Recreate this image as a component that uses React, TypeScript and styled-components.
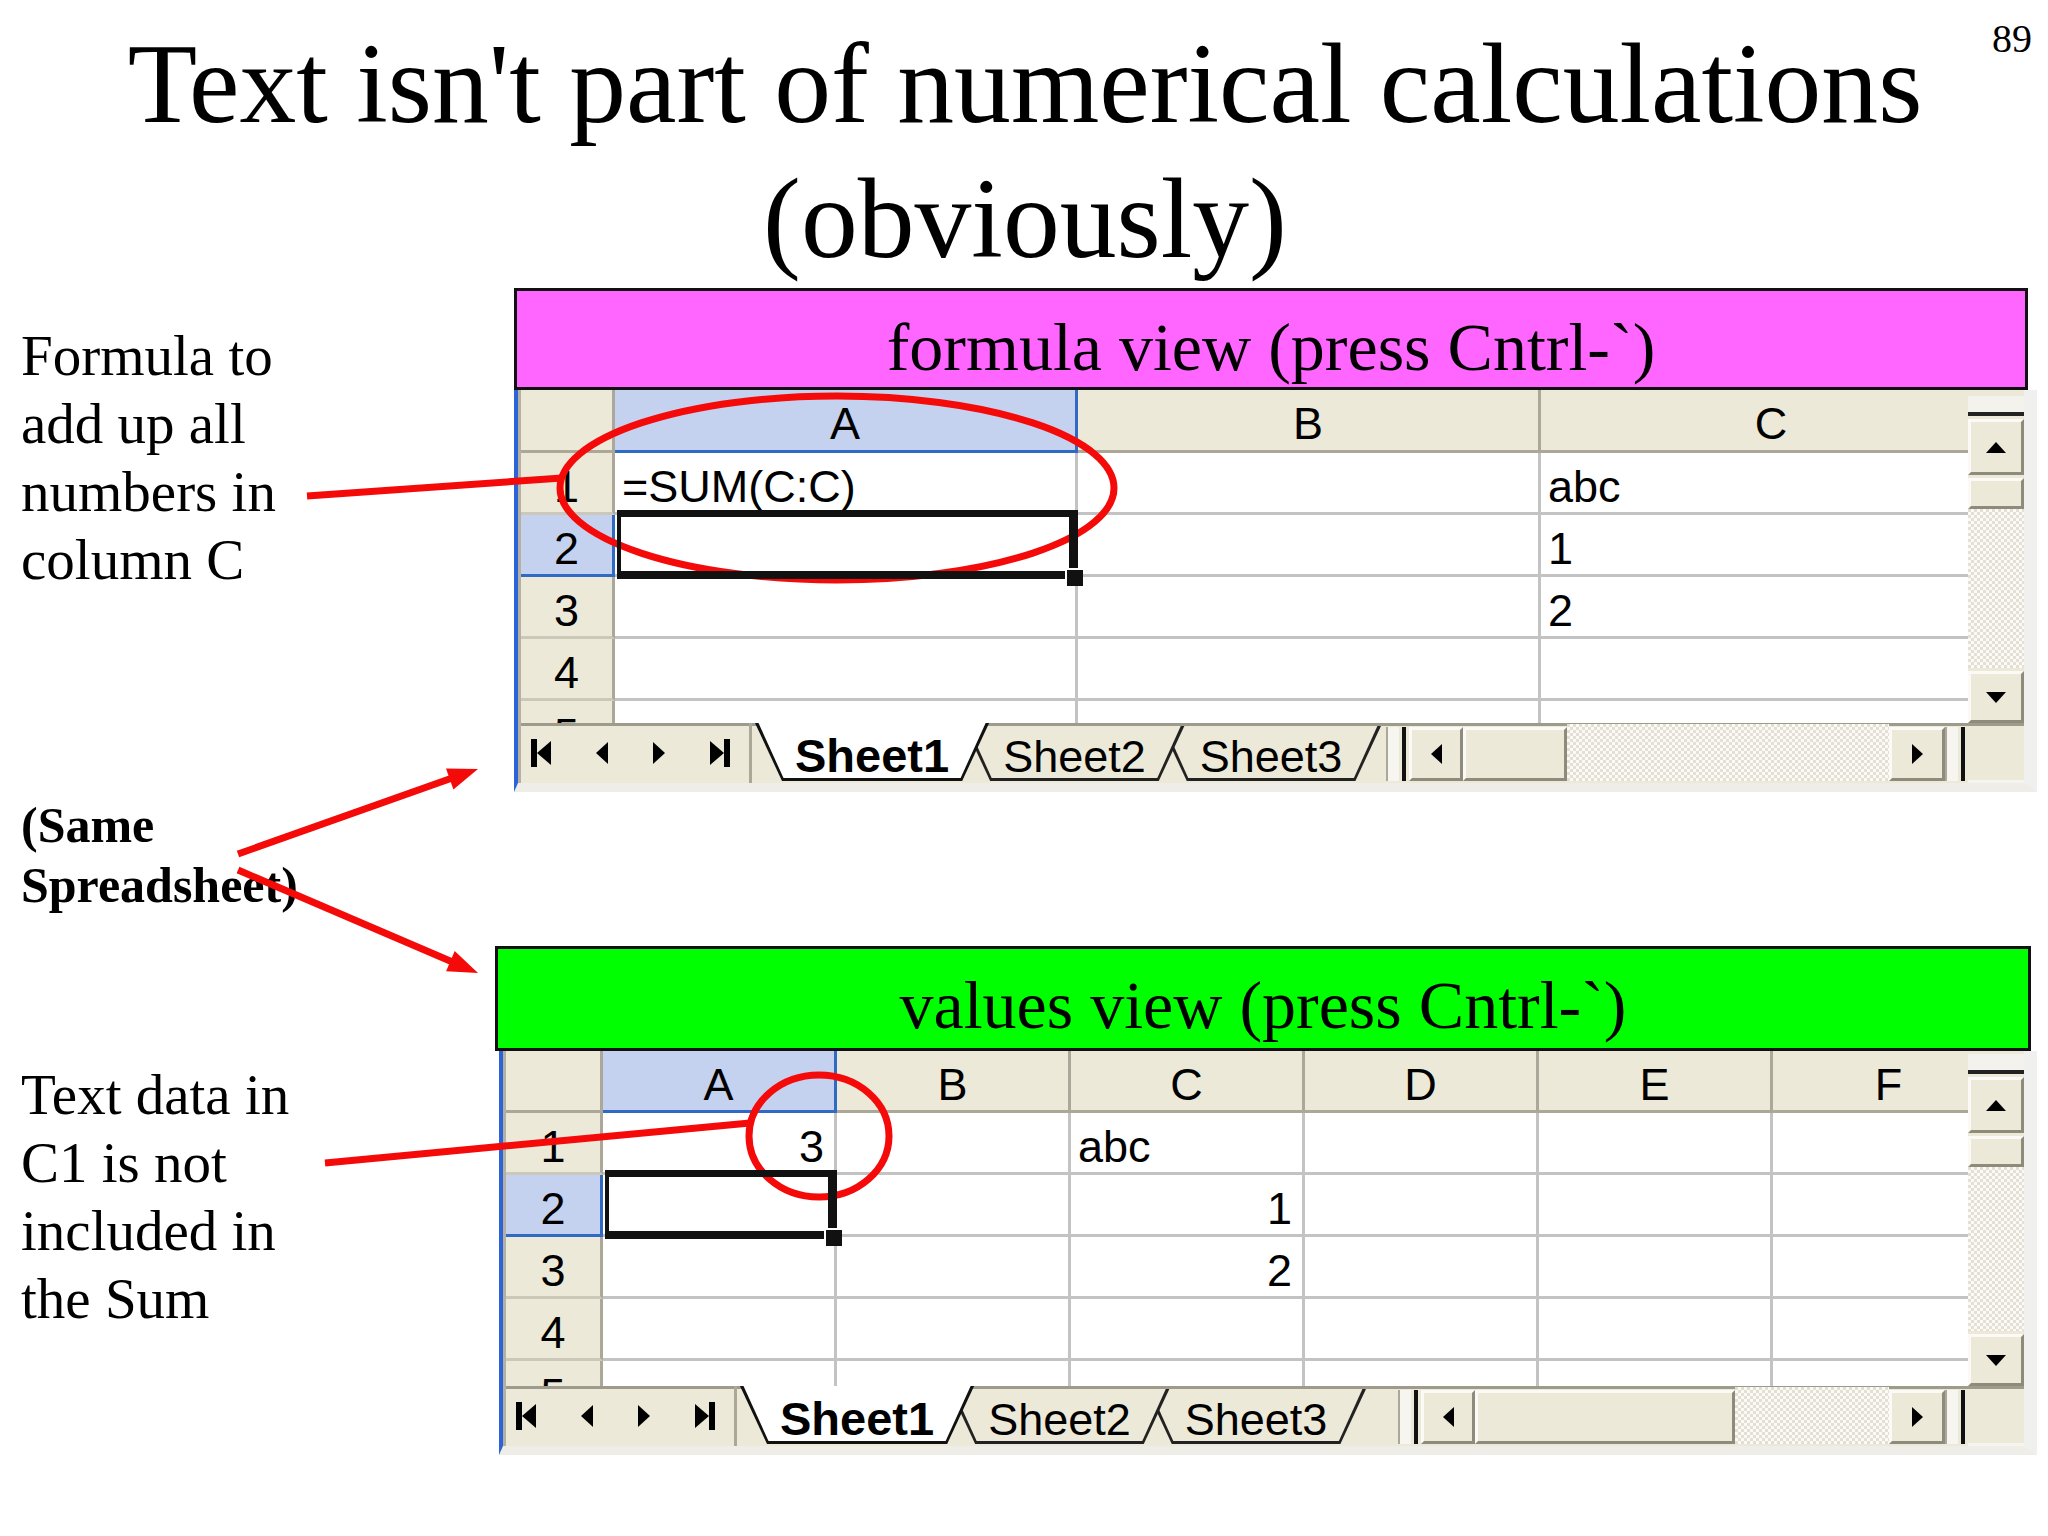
import React from "react";
import styled, { createGlobalStyle, css } from "styled-components";

const BEIGE = "#ece9d8";
const EDGE = "#aca899";
const GRID = "#c3c3c3";
const SEL_HEAD = "#c4d2ef";
const SEL_BLUE = "#316ac5";
const RED = "#f50a0a";

const GlobalStyle = createGlobalStyle`
  html, body {
    margin: 0;
    padding: 0;
    background: #fff;
  }
  body {
    width: 2048px;
    height: 1536px;
    overflow: hidden;
  }
`;

type Dir = "up" | "down" | "left" | "right";
type Align = "left" | "right";

type SheetSpec = {
    offset: number;
    rowHeadWidth: number;
    colWidth: number;
    columns: string[];
    cells: Record<string, { text: string; align: Align }>;
    headerHeight: number;
    partialHeight: number;
    hscrollWidth: number;
    thumbWidth: number;
    vscrollPad: number;
};

// formula view: three wide columns, C runs under the scroll bar
const formulaSheet: SheetSpec = {
    offset: 0,
    rowHeadWidth: 94,
    colWidth: 463,
    columns: ["A", "B", "C"],
    cells: {
        A1: { text: "=SUM(C:C)", align: "left" },
        C1: { text: "abc", align: "left" },
        C2: { text: "1", align: "left" },
        C3: { text: "2", align: "left" },
    },
    headerHeight: 63,
    partialHeight: 22,
    hscrollWidth: 582,
    thumbWidth: 104,
    vscrollPad: 6,
};

const valuesSheet: SheetSpec = {
    offset: 4,
    rowHeadWidth: 97,
    colWidth: 234,
    columns: ["A", "B", "C", "D", "E", "F"],
    cells: {
        A1: { text: "3", align: "right" },
        C1: { text: "abc", align: "left" },
        C2: { text: "1", align: "right" },
        C3: { text: "2", align: "right" },
    },
    headerHeight: 62,
    partialHeight: 25,
    hscrollWidth: 570,
    thumbWidth: 260,
    vscrollPad: 3,
};

const Slide = styled.div`
    position: relative;
    width: 2048px;
    height: 1536px;
    box-sizing: border-box;
    padding: 17px 19px 0 21px;
    background: #fff;
    color: #000;
    font-family: "Liberation Serif", "Times New Roman", serif;
`;

const Header = styled.header`
    display: grid;
    grid-template-columns: 1fr auto 1fr;
    align-items: start;
`;

const Title = styled.h1`
    grid-column: 2;
    margin: 0;
    font-size: 113.6px;
    font-weight: normal;
    line-height: 135px;
    text-align: center;
    white-space: nowrap;
`;

const PageNumber = styled.div`
    grid-column: 3;
    justify-self: end;
    margin: 2px -3px 0 0;
    font-size: 40px;
    line-height: 40px;
`;

const Row = styled.section<{ $labelWidth: number; $gap: number }>`
    display: grid;
    grid-template-columns: ${p => p.$labelWidth}px minmax(0, 1fr);
    margin-top: ${p => p.$gap}px;
    margin-right: -8px;
`;

const Label = styled.p<{ $top: number }>`
    margin: ${p => p.$top}px 0 0;
    font-size: 57px;
    line-height: 68px;
    white-space: nowrap;
`;

const Note = styled.p`
    margin: 3px 0 0;
    font-size: 50px;
    font-weight: bold;
    line-height: 60px;
`;

const Panel = styled.div`
    display: flex;
    flex-direction: column;
    min-width: 0;
`;

const Banner = styled.div<{ $bg: string; $height: number; $right: number }>`
    box-sizing: border-box;
    height: ${p => p.$height}px;
    margin-right: ${p => p.$right}px;
    padding-top: 17px;
    border: 3px solid #111;
    background: ${p => p.$bg};
    font-size: 68px;
    text-align: center;
    white-space: nowrap;
`;

const Sheet = styled.div<{ $offset: number }>`
    margin-left: ${p => p.$offset}px;
    border-left: 4px solid #2d63d8;
    border-right: 13px solid #f0f0ee;
    border-bottom: 9px solid #eeede7;
    background: #fff;
`;

const SheetInner = styled.div`
    display: flex;
    flex-direction: column;
    border-left: 3px solid #b4b1a3;
    font-family: "Liberation Sans", Arial, sans-serif;
    font-size: 45px;
    line-height: 45px;
`;

const GridArea = styled.div`
    display: flex;
`;

const Table = styled.div<{ $columns: string; $header: number; $partial: number }>`
    flex: 1 1 0;
    min-width: 0;
    overflow: hidden;
    display: grid;
    grid-template-columns: ${p => p.$columns};
    grid-template-rows: ${p => p.$header}px repeat(4, 62px) ${p => p.$partial}px;
`;

const CornerCell = styled.div`
    box-sizing: border-box;
    background: ${BEIGE};
    border-right: 3px solid ${EDGE};
    border-bottom: 3px solid ${EDGE};
`;

const HeadCell = styled.div<{ $selected?: boolean }>`
    box-sizing: border-box;
    padding-top: 11px;
    text-align: center;
    background: ${p => (p.$selected ? SEL_HEAD : BEIGE)};
    border-right: 3px solid ${p => (p.$selected ? SEL_BLUE : EDGE)};
    border-bottom: 3px solid ${p => (p.$selected ? SEL_BLUE : EDGE)};
`;

const RowHead = styled.div<{ $selected?: boolean; $partial?: boolean }>`
    box-sizing: border-box;
    overflow: hidden;
    padding-top: 11px;
    text-align: center;
    background: ${p => (p.$selected ? SEL_HEAD : BEIGE)};
    border-right: 3px solid ${p => (p.$selected ? SEL_BLUE : EDGE)};
    border-bottom: ${p => (p.$partial ? "none" : `3px solid ${p.$selected ? SEL_BLUE : "#cbc8b9"}`)};
`;

const Cell = styled.div<{ $align: Align; $partial?: boolean; $active?: boolean }>`
    position: relative;
    box-sizing: border-box;
    padding: 11px 10px 0 7px;
    text-align: ${p => p.$align};
    white-space: nowrap;
    border-right: 3px solid ${GRID};
    border-bottom: ${p => (p.$partial ? "none" : `3px solid ${GRID}`)};
    ${p =>
        p.$active &&
        css`
            z-index: 2;
            &::after {
                content: "";
                position: absolute;
                top: -5px;
                left: 2px;
                right: -3px;
                bottom: -5px;
                border: solid #111;
                border-width: 7px 9px 8px 4px;
            }
            &::before {
                content: "";
                position: absolute;
                z-index: 1;
                right: -8px;
                bottom: -12px;
                width: 16px;
                height: 16px;
                background: #111;
                border: 2px solid #fff;
                border-right: none;
                border-bottom: none;
            }
        `}
`;

const VScroll = styled.div<{ $pad: number }>`
    flex: none;
    display: flex;
    flex-direction: column;
    width: 56px;
    box-sizing: border-box;
    padding-top: ${p => p.$pad}px;
    background: ${BEIGE};
`;

const SplitBox = styled.div`
    height: 16px;
    background: #f3f2ec;
    border-bottom: 4px solid #222;
`;

const ScrollButton = styled.div<{ $w?: number; $h?: number }>`
    flex: none;
    display: flex;
    align-items: center;
    justify-content: center;
    box-sizing: border-box;
    width: ${p => (p.$w ? `${p.$w}px` : "auto")};
    height: ${p => (p.$h ? `${p.$h}px` : "auto")};
    margin-top: 3px;
    background: ${BEIGE};
    border: 3px solid;
    border-color: #fbfaf6 #8e8b7d #8e8b7d #fbfaf6;
`;

const Thumb = styled(ScrollButton)``;

const Track = styled.div`
    flex: 1;
    background: repeating-conic-gradient(#fbfaf6 0% 25%, #e3e0d3 0% 50%) 0 0 / 6px 6px;
`;

const Tri = styled.span<{ $dir: Dir; $w: number; $h: number }>`
    display: block;
    width: 0;
    height: 0;
    border-style: solid;
    border-color: transparent;
    ${({ $dir, $w, $h }) => {
        switch ($dir) {
            case "up":
                return css`
                    border-width: 0 ${$w / 2}px ${$h}px;
                    border-bottom-color: #000;
                `;
            case "down":
                return css`
                    border-width: ${$h}px ${$w / 2}px 0;
                    border-top-color: #000;
                `;
            case "left":
                return css`
                    border-width: ${$h / 2}px ${$w}px ${$h / 2}px 0;
                    border-right-color: #000;
                `;
            default:
                return css`
                    border-width: ${$h / 2}px 0 ${$h / 2}px ${$w}px;
                    border-left-color: #000;
                `;
        }
    }}
`;

const TabBar = styled.div`
    display: flex;
    height: 60px;
    background: ${BEIGE};
    box-shadow: inset 0 3px 0 #9e9b8d;
`;

const Nav = styled.div`
    display: flex;
    align-items: center;
    justify-content: space-between;
    box-sizing: border-box;
    width: 231px;
    padding: 0 19px 0 10px;
    border-right: 3px solid ${EDGE};
`;

const NavGlyph = styled.span`
    display: flex;
    align-items: center;
`;

const NavBar = styled.span`
    display: block;
    width: 6px;
    height: 28px;
    background: #000;
`;

const Tabs = styled.div`
    flex: 1;
    display: flex;
    padding-left: 3px;
`;

const Tab = styled.div<{ $active?: boolean; $z: number }>`
    position: relative;
    z-index: ${p => p.$z};
    height: 58px;
    margin-left: -26px;
    padding: ${p => (p.$active ? 10 : 11)}px 40px 0;
    box-sizing: border-box;
    white-space: nowrap;
    font-size: ${p => (p.$active ? 47 : 45)}px;
    font-weight: ${p => (p.$active ? "bold" : "normal")};
    background: ${p => (p.$active ? "#111" : "linear-gradient(#9e9b8d 0 3px, #222 3px)")};
    clip-path: polygon(0 0, 100% 0, calc(100% - 27px) 100%, 27px 100%);
    &:first-child {
        margin-left: 0;
    }
    &::before {
        content: "";
        position: absolute;
        inset: 0;
        z-index: -1;
        background: ${p => (p.$active ? "#fff" : BEIGE)};
        clip-path: ${p =>
            p.$active
                ? "polygon(3.5px 0, calc(100% - 3.5px) 0, calc(100% - 28.5px) calc(100% - 3px), 28.5px calc(100% - 3px))"
                : "polygon(5px 3px, calc(100% - 5px) 3px, calc(100% - 28.5px) calc(100% - 3px), 28.5px calc(100% - 3px))"};
    }
`;

const HScroll = styled.div<{ $width: number }>`
    flex: none;
    display: flex;
    align-items: stretch;
    width: ${p => p.$width}px;
    padding: 1px 0 2px;
    box-sizing: border-box;
`;

const Splitter = styled.div`
    width: 11px;
    margin-top: 3px;
    background: #f6f5f0;
    border-left: 2px solid ${EDGE};
`;

const Divider = styled.div`
    width: 4px;
    margin: 3px 3px 0;
    background: #111;
`;

const Corner = styled.div`
    flex: none;
    width: 56px;
    box-shadow: inset 0 -3px 0 #f5f4ef;
`;

const Annotations = styled.svg`
    position: absolute;
    left: 0;
    top: 0;
    width: 2048px;
    height: 1536px;
    pointer-events: none;
`;

const SheetView = ({ spec }: { spec: SheetSpec }) => {
    const template = [spec.rowHeadWidth, ...spec.columns.map(() => spec.colWidth)].map(w => `${w}px`).join(" ");

    return (
        <Sheet $offset={spec.offset}>
            <SheetInner>
                <GridArea>
                    <Table $columns={template} $header={spec.headerHeight} $partial={spec.partialHeight}>
                        <CornerCell />
                        {spec.columns.map(c => (
                            <HeadCell key={c} $selected={c === "A"}>
                                {c}
                            </HeadCell>
                        ))}
                        {[1, 2, 3, 4, 5].map(r => (
                            <React.Fragment key={r}>
                                <RowHead $selected={r === 2} $partial={r === 5}>
                                    {r}
                                </RowHead>
                                {spec.columns.map(c => {
                                    const cell = spec.cells[`${c}${r}`];
                                    return (
                                        <Cell
                                            key={c}
                                            $align={cell ? cell.align : "left"}
                                            $partial={r === 5}
                                            $active={c === "A" && r === 2}
                                        >
                                            {cell ? cell.text : ""}
                                        </Cell>
                                    );
                                })}
                            </React.Fragment>
                        ))}
                    </Table>
                    <VScroll $pad={spec.vscrollPad}>
                        <SplitBox />
                        <ScrollButton $h={56}>
                            <Tri $dir="up" $w={20} $h={11} />
                        </ScrollButton>
                        <Thumb $h={31} />
                        <Track />
                        <ScrollButton $h={52}>
                            <Tri $dir="down" $w={20} $h={11} />
                        </ScrollButton>
                    </VScroll>
                </GridArea>
                <TabBar>
                    <Nav>
                        <NavGlyph>
                            <NavBar />
                            <Tri $dir="left" $w={14} $h={24} />
                        </NavGlyph>
                        <NavGlyph>
                            <Tri $dir="left" $w={12} $h={22} />
                        </NavGlyph>
                        <NavGlyph>
                            <Tri $dir="right" $w={12} $h={22} />
                        </NavGlyph>
                        <NavGlyph>
                            <Tri $dir="right" $w={14} $h={24} />
                            <NavBar />
                        </NavGlyph>
                    </Nav>
                    <Tabs>
                        <Tab $active $z={3}>Sheet1</Tab>
                        <Tab $z={2}>Sheet2</Tab>
                        <Tab $z={1}>Sheet3</Tab>
                    </Tabs>
                    <HScroll $width={spec.hscrollWidth}>
                        <Splitter />
                        <Divider />
                        <ScrollButton $w={54}>
                            <Tri $dir="left" $w={11} $h={20} />
                        </ScrollButton>
                        <Thumb $w={spec.thumbWidth} />
                        <Track />
                        <ScrollButton $w={56}>
                            <Tri $dir="right" $w={11} $h={20} />
                        </ScrollButton>
                        <Splitter />
                        <Divider />
                    </HScroll>
                    <Corner />
                </TabBar>
            </SheetInner>
        </Sheet>
    );
};

const App = () => {
    return (
        <>
            <GlobalStyle />
            <Slide>
                <Header>
                    <Title>
                        Text isn't part of numerical calculations
                        <br />
                        (obviously)
                    </Title>
                    <PageNumber>89</PageNumber>
                </Header>

                <Row $labelWidth={493} $gap={1}>
                    <Label $top={34}>
                        Formula to
                        <br />
                        add up all
                        <br />
                        numbers in
                        <br />
                        column C
                    </Label>
                    <Panel>
                        <Banner $bg="#ff66ff" $height={102} $right={9}>
                            formula view (press Cntrl-`)
                        </Banner>
                        <SheetView spec={formulaSheet} />
                    </Panel>
                </Row>

                <Note>
                    (Same
                    <br />
                    Spreadsheet)
                </Note>

                <Row $labelWidth={474} $gap={31}>
                    <Label $top={115}>
                        Text data in
                        <br />
                        C1 is not
                        <br />
                        included in
                        <br />
                        the Sum
                    </Label>
                    <Panel>
                        <Banner $bg="#00ff00" $height={105} $right={6}>
                            values view (press Cntrl-`)
                        </Banner>
                        <SheetView spec={valuesSheet} />
                    </Panel>
                </Row>

                <Annotations viewBox="0 0 2048 1536">
                    <g stroke={RED} strokeWidth={7} fill="none">
                        <line x1={307} y1={496} x2={562} y2={478} />
                        <ellipse cx={837} cy={488} rx={277} ry={92} />
                        <line x1={238} y1={854} x2={455} y2={777} />
                        <line x1={238} y1={870} x2={456} y2={963.5} />
                        <line x1={325} y1={1163} x2={750} y2={1123} />
                        <ellipse cx={819} cy={1136} rx={70} ry={61} />
                    </g>
                    <g fill={RED}>
                        <polygon points="478,769 453.4,789.4 446,768.6" />
                        <polygon points="478,973 446.1,971.3 454.7,951.1" />
                    </g>
                </Annotations>
            </Slide>
        </>
    );
};

export default App;
